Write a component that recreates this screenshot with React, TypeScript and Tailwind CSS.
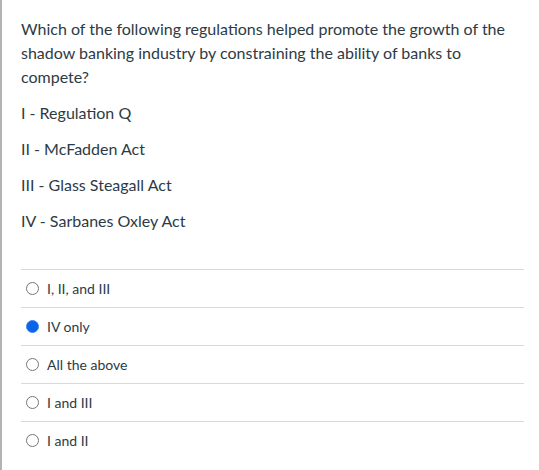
import React from 'react'

const regulations = [
  'I - Regulation Q',
  'II - McFadden Act',
  'III - Glass Steagall Act',
  'IV - Sarbanes Oxley Act',
]

const answers = [
  { label: 'I, II, and III', checked: false },
  { label: 'IV only', checked: true },
  { label: 'All the above', checked: false },
  { label: 'I and III', checked: false },
  { label: 'I and II', checked: false },
]

function Radio({ checked }: { checked: boolean }) {
  if (checked) {
    return (
      <span className="w-[13px] h-[13px] rounded-full bg-[#0b63e5] border border-[#3b82f6] shrink-0" />
    )
  }
  return <span className="w-[13px] h-[13px] rounded-full border border-[#767676] bg-white shrink-0" />
}

export default function App() {
  return (
    <div
      className="w-[539px] h-[470px] bg-white border-l-2 border-[#b3b3b3] text-[#2d3b45] overflow-hidden"
      style={{ fontFamily: 'Lato, "Open Sans", sans-serif' }}
    >
      <div className="pl-[19px] pr-[15px] pt-[17px]">
        {/* Question */}
        <p className="text-[16px] leading-[24px] mb-[12px] w-[490px]">
          Which of the following regulations helped promote the growth of the shadow banking
          industry by constraining the ability of banks to compete?
        </p>
        {regulations.map((r) => (
          <p key={r} className="text-[16px] leading-[24px] mb-[12px]">
            {r}
          </p>
        ))}

        {/* Answers */}
        <div className="mt-[36px] w-[503px]">
          {answers.map((a) => (
            <div key={a.label} className="border-t border-[#d9d9d9] h-[38px] flex items-center pl-[5px]">
              <Radio checked={a.checked} />
              <span className="ml-[8px] text-[14px]">{a.label}</span>
            </div>
          ))}
        </div>
      </div>
    </div>
  )
}
